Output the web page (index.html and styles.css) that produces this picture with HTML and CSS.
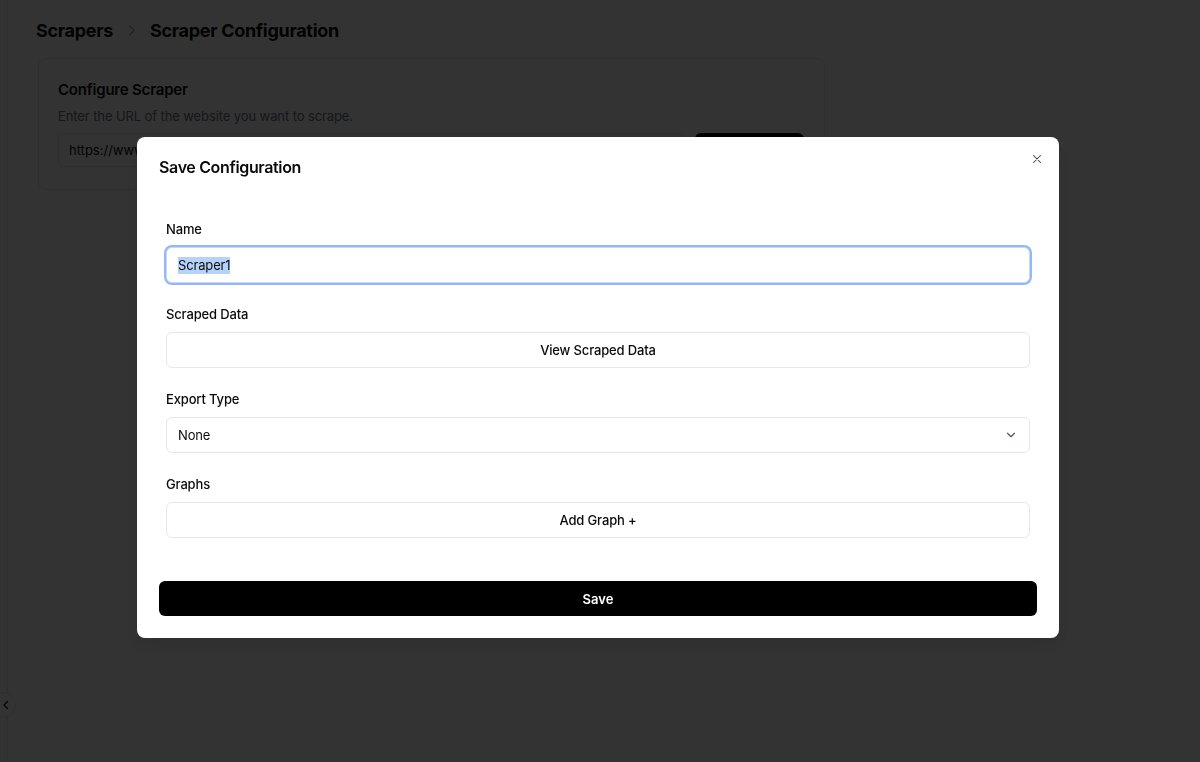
FILE: index.html
```html
<!DOCTYPE html>
<html lang="en">
<head>
<meta charset="utf-8">
<title>Scraper Configuration</title>
<link rel="stylesheet" href="styles.css">
</head>
<body>
<div class="app">
  <aside class="sidebar"></aside>
  <main class="main">
    <nav class="crumbs">
      <span class="crumb">Scrapers</span>
      <svg class="crumb-sep" viewBox="0 0 24 24" width="15" height="15"><path d="M9 5l7 7-7 7" fill="none" stroke="currentColor" stroke-width="1.8" stroke-linecap="round" stroke-linejoin="round"/></svg>
      <span class="crumb">Scraper Configuration</span>
    </nav>
    <section class="card">
      <h2 class="card-title">Configure Scraper</h2>
      <p class="card-sub">Enter the URL of the website you want to scrape.</p>
      <div class="card-row">
        <div class="url-input">https://www.example.com</div>
        <button class="dark-btn">Scrape</button>
      </div>
    </section>
  </main>
  <button class="collapse-btn" aria-label="Collapse">
    <svg viewBox="0 0 24 24" width="12" height="12"><path d="M15 5l-7 7 7 7" fill="none" stroke="currentColor" stroke-width="2.4" stroke-linecap="round" stroke-linejoin="round"/></svg>
  </button>
</div>

<div class="overlay"></div>

<div class="dialog" role="dialog">
  <h3 class="dialog-title">Save Configuration</h3>
  <button class="close-btn" aria-label="Close">
    <svg viewBox="0 0 24 24" width="14" height="14"><path d="M6 6l12 12M18 6L6 18" fill="none" stroke="currentColor" stroke-width="1.8" stroke-linecap="round"/></svg>
  </button>
  <div class="form">
    <div class="field">
      <label class="label">Name</label>
      <div class="control input focused"><span class="sel">Scraper1</span></div>
    </div>
    <div class="field">
      <label class="label">Scraped Data</label>
      <button class="control outline-btn">View Scraped Data</button>
    </div>
    <div class="field">
      <label class="label">Export Type</label>
      <div class="control select">
        <span>None</span>
        <svg class="chev" viewBox="0 0 24 24" width="14" height="14"><path d="M6 9l6 6 6-6" fill="none" stroke="currentColor" stroke-width="2" stroke-linecap="round" stroke-linejoin="round"/></svg>
      </div>
    </div>
    <div class="field">
      <label class="label">Graphs</label>
      <button class="control outline-btn">Add Graph +</button>
    </div>
  </div>
  <button class="save-btn">Save</button>
</div>
</body>
</html>
```
FILE: styles.css
```css
* { box-sizing: border-box; }
html, body {
  margin: 0;
  padding: 0;
  height: 100%;
  background: #ffffff;
  font-family: Inter, "Noto Sans", "Liberation Sans", sans-serif;
  color: #0a0a0a;
}
button { font-family: inherit; }
.app {
  display: flex;
  min-height: 100vh;
  position: relative;
}
.sidebar {
  width: 8px;
  border-right: 1px solid #e5e7eb;
  flex: none;
}
.main {
  flex: 1;
  padding: 18px 0 0 28px;
}
.crumbs {
  display: flex;
  align-items: center;
  gap: 11px;
  height: 24px;
}
.crumb {
  font-size: 18px;
  font-weight: 700;
  letter-spacing: -0.3px;
  color: #0a0a0a;
}
.crumb-sep { color: #9ca3af; }
.card {
  margin-top: 16px;
  margin-left: 2px;
  width: 787px;
  height: 132px;
  border: 1px solid #e5e7eb;
  border-radius: 8px;
  padding: 21px 20px 20px 19px;
}
.card-title {
  margin: 0;
  font-size: 15px;
  font-weight: 600;
  line-height: 20px;
  letter-spacing: -0.2px;
}
.card-sub {
  margin: 7px 0 0;
  font-size: 13px;
  line-height: 18px;
  color: #6b7280;
  letter-spacing: -0.1px;
}
.card-row {
  display: flex;
  gap: 10px;
  margin-top: 8px;
}
.url-input {
  flex: 1;
  height: 34px;
  border: 1px solid #e5e7eb;
  border-radius: 6px;
  padding: 0 10px;
  display: flex;
  align-items: center;
  font-size: 13px;
}
.dark-btn {
  width: 109px;
  height: 34px;
  border: 0;
  border-radius: 6px;
  background: #000;
  color: #fff;
  font-size: 13px;
  font-weight: 600;
}
.collapse-btn {
  position: absolute;
  left: -10px;
  top: 692px;
  width: 26px;
  height: 26px;
  border-radius: 50%;
  border: 1px solid #e5e7eb;
  background: #fff;
  color: #111;
  display: flex;
  align-items: center;
  justify-content: flex-end;
  padding: 0 3px 0 0;
}
.overlay {
  position: fixed;
  inset: 0;
  background: rgba(0, 0, 0, 0.8);
}
.dialog {
  position: fixed;
  left: 137px;
  top: 137px;
  width: 922px;
  background: #fff;
  border-radius: 8px;
  padding: 18px 22px 22px;
  box-shadow: 0 10px 20px rgba(0,0,0,0.1);
}
.dialog-title {
  margin: 0;
  font-size: 16px;
  font-weight: 600;
  line-height: 24px;
  letter-spacing: -0.35px;
}
.close-btn {
  position: absolute;
  top: 15px;
  right: 15px;
  width: 14px;
  height: 14px;
  padding: 0;
  border: 0;
  background: none;
  color: #374151;
  display: flex;
}
.form {
  padding: 40px 7px 0;
  display: flex;
  flex-direction: column;
  gap: 21px;
}
.field {
  display: flex;
  flex-direction: column;
  gap: 8px;
}
.label {
  font-size: 13px;
  font-weight: 500;
  line-height: 20px;
  color: #0a0a0a;
  letter-spacing: -0.15px;
}
.control {
  height: 36px;
  border: 1px solid #e5e7eb;
  border-radius: 6px;
  background: #fff;
  font-size: 13px;
  color: #0a0a0a;
  letter-spacing: -0.15px;
}
.input {
  display: flex;
  align-items: center;
  padding: 0 11px;
}
.focused {
  border-color: #c7d8f7;
  box-shadow: 0 0 0 2px #93b8f5;
}
.sel {
  background: #b5d2fb;
  line-height: 17px;
}
.outline-btn {
  width: 100%;
  font-weight: 500;
  cursor: pointer;
}
.select {
  display: flex;
  align-items: center;
  justify-content: space-between;
  padding: 0 11px;
}
.chev { color: #4b5563; }
.save-btn {
  margin-top: 43px;
  width: 100%;
  height: 35px;
  border: 0;
  border-radius: 6px;
  background: #000;
  color: #fff;
  font-size: 13px;
  font-weight: 600;
}
```
